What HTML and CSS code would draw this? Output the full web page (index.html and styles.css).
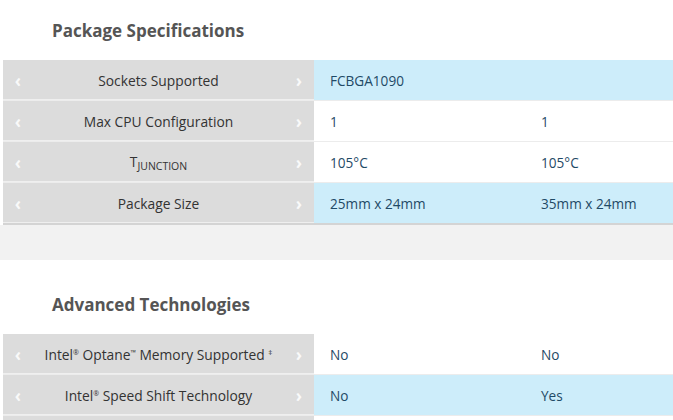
FILE: index.html
```html
<!DOCTYPE html>
<html>
<head>
<meta charset="utf-8">
<link rel="stylesheet" href="styles.css">
</head>
<body>
<section class="spec-section spec-section--first">
  <h2 class="spec-title">Package Specifications</h2>
  <div class="spec-table">
    <div class="spec-row spec-row--blue">
      <div class="spec-label"><span class="chev">‹</span><span class="label-text">Sockets Supported</span><span class="chev">›</span></div>
      <div class="spec-val">FCBGA1090</div>
      <div class="spec-val"></div>
    </div>
    <div class="spec-row">
      <div class="spec-label"><span class="chev">‹</span><span class="label-text">Max CPU Configuration</span><span class="chev">›</span></div>
      <div class="spec-val">1</div>
      <div class="spec-val">1</div>
    </div>
    <div class="spec-row">
      <div class="spec-label"><span class="chev">‹</span><span class="label-text">T<sub class="sub">JUNCTION</sub></span><span class="chev">›</span></div>
      <div class="spec-val">105°C</div>
      <div class="spec-val">105°C</div>
    </div>
    <div class="spec-row spec-row--blue spec-row--last">
      <div class="spec-label"><span class="chev">‹</span><span class="label-text">Package Size</span><span class="chev">›</span></div>
      <div class="spec-val">25mm x 24mm</div>
      <div class="spec-val">35mm x 24mm</div>
    </div>
  </div>
</section>
<div class="band"></div>
<section class="spec-section">
  <h2 class="spec-title">Advanced Technologies</h2>
  <div class="spec-table">
    <div class="spec-row">
      <div class="spec-label"><span class="chev">‹</span><span class="label-text">Intel<sup class="mark">®</sup> Optane<sup class="mark">™</sup> Memory Supported <sup class="dagger">‡</sup></span><span class="chev">›</span></div>
      <div class="spec-val">No</div>
      <div class="spec-val">No</div>
    </div>
    <div class="spec-row spec-row--blue">
      <div class="spec-label"><span class="chev">‹</span><span class="label-text">Intel<sup class="mark">®</sup> Speed Shift Technology</span><span class="chev">›</span></div>
      <div class="spec-val">No</div>
      <div class="spec-val">Yes</div>
    </div>
    <div class="spec-row">
      <div class="spec-label"></div>
      <div class="spec-val"></div>
      <div class="spec-val"></div>
    </div>
  </div>
</section>
</body>
</html>
```
FILE: styles.css
```css
html, body {
  margin: 0;
  padding: 0;
  background: #ffffff;
  font-family: "Open Sans", "Noto Sans", sans-serif;
  overflow: hidden;
}

.spec-section {
  background: #ffffff;
  padding: 33px 0 0 3px;
}

.spec-section--first {
  margin-top: -14px;
}

.spec-title {
  margin: 0 0 17px 49px;
  font-size: 17px;
  line-height: 24px;
  font-weight: 700;
  color: #555555;
}

.spec-table {
  display: flex;
  flex-direction: column;
}

.spec-row {
  display: grid;
  grid-template-columns: 311px 211px 1fr;
  height: 40px;
  border-bottom: 1px solid #ececec;
}

.spec-row--last {
  border-bottom: 2px solid #d4d4d4;
}

.spec-row--blue .spec-val {
  background: #cdedfa;
}

.spec-label {
  background: #dcdcdc;
  display: flex;
  align-items: center;
  justify-content: space-between;
  padding: 0 9px 0 9px;
  font-size: 13.8px;
  color: #333333;
  box-shadow: inset 0 -1px 0 #efefef;
}

.chev {
  color: #ffffff;
  font-size: 17px;
  font-weight: 700;
  width: 12px;
  text-align: center;
  opacity: 0.85;
}

.label-text {
  flex: 1;
  text-align: center;
}

.sub {
  font-size: 10.5px;
  vertical-align: -3px;
}

.mark {
  font-size: 7px;
  vertical-align: 5px;
}

.dagger {
  font-size: 8px;
  vertical-align: 5px;
}

.spec-val {
  display: flex;
  align-items: center;
  padding-left: 16px;
  font-size: 13.6px;
  color: #1f4a66;
  background: #ffffff;
}

.band {
  height: 35px;
  background: #f2f2f2;
}
```
